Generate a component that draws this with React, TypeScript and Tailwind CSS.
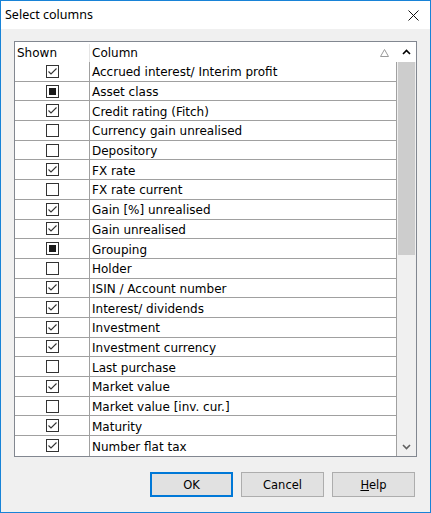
type State = "checked" | "mixed" | "empty"

const rows: { label: string; state: State }[] = [
    { label: "Accrued interest/ Interim profit", state: "checked" },
    { label: "Asset class", state: "mixed" },
    { label: "Credit rating (Fitch)", state: "checked" },
    { label: "Currency gain unrealised", state: "empty" },
    { label: "Depository", state: "empty" },
    { label: "FX rate", state: "checked" },
    { label: "FX rate current", state: "empty" },
    { label: "Gain [%] unrealised", state: "checked" },
    { label: "Gain unrealised", state: "checked" },
    { label: "Grouping", state: "mixed" },
    { label: "Holder", state: "empty" },
    { label: "ISIN / Account number", state: "checked" },
    { label: "Interest/ dividends", state: "checked" },
    { label: "Investment", state: "checked" },
    { label: "Investment currency", state: "checked" },
    { label: "Last purchase", state: "empty" },
    { label: "Market value", state: "checked" },
    { label: "Market value [inv. cur.]", state: "empty" },
    { label: "Maturity", state: "checked" },
    { label: "Number flat tax", state: "checked" },
]

function CheckBox({ state }: { state: State }) {
    return (
        <div className="w-[13px] h-[13px] border border-[#333333] bg-white flex items-center justify-center">
            {state === "checked" && (
                <svg width="11" height="11" viewBox="0 0 11 11">
                    <polyline points="1.5,5.5 4,8 9.5,2.5" fill="none" stroke="#333333" strokeWidth="1.1" />
                </svg>
            )}
            {state === "mixed" && <div className="w-[7px] h-[7px] bg-[#1a1a1a]" />}
        </div>
    )
}

function Button({ children, primary }: { children: React.ReactNode; primary?: boolean }) {
    return (
        <button
            className={
                primary
                    ? "w-[83px] h-[25px] pt-[2px] bg-[#e1e1e1] border-2 border-[#0078d7] text-[11.5px] text-black"
                    : "w-[83px] h-[25px] pt-[2px] bg-[#e1e1e1] border border-[#adadad] text-[11.5px] text-black"
            }
        >
            {children}
        </button>
    )
}

export default function App() {
    return (
        <div className="w-[431px] h-[513px] border border-[#1883d7] bg-[#f0f0f0] flex flex-col font-['DejaVu_Sans',sans-serif] text-[12px] text-black">
            {/* title bar */}
            <div className="h-[28px] bg-white flex items-center justify-between pl-[4px] pr-[11px] shrink-0">
                <span className="font-['Noto_Sans',sans-serif] text-[12.5px] text-black pt-[1px]">Select columns</span>
                <svg width="11" height="11" viewBox="0 0 11 11">
                    <path d="M0.5 0.5 L10.5 10.5 M10.5 0.5 L0.5 10.5" stroke="#111" strokeWidth="1" />
                </svg>
            </div>

            <div className="pl-[13px] pr-[14px] pt-[12px] flex flex-col">
                {/* list */}
                <div className="w-[403px] h-[416px] border border-[#828790] bg-white flex">
                    <div className="w-[382px] flex flex-col">
                        <div className="h-[20px] flex items-center shrink-0 pt-[2px]">
                            <div className="w-[75px] h-full pl-[2px] flex items-center border-r border-[#e5e5e5]">Shown</div>
                            <div className="flex-1 pl-[2px] flex items-center justify-between pr-[8px]">
                                <span>Column</span>
                                <svg width="9" height="8" viewBox="0 0 9 8">
                                    <polygon points="4.5,0.5 8.5,7.5 0.5,7.5" fill="none" stroke="#9a9a9a" strokeWidth="1" />
                                </svg>
                            </div>
                        </div>
                        <div className="flex-1 flex flex-col border-r border-[#a0a0a0]">
                            {rows.map((row) => (
                                <div key={row.label} className="h-[19.7px] flex border-b border-[#a0a0a0] last:border-b-0">
                                    <div className="w-[75px] flex items-center justify-center border-r border-[#a0a0a0]">
                                        <CheckBox state={row.state} />
                                    </div>
                                    <div className="flex-1 pl-[2px] pt-[2px] flex items-center">{row.label}</div>
                                </div>
                            ))}
                        </div>
                    </div>
                    {/* scrollbar */}
                    <div className="flex-1 bg-[#f0f0f0] flex flex-col">
                        <div className="h-[20px] flex items-center justify-center bg-white">
                            <svg width="9" height="6" viewBox="0 0 9 6">
                                <polyline points="1,5 4.5,1.5 8,5" fill="none" stroke="#000" strokeWidth="1.6" />
                            </svg>
                        </div>
                        <div className="h-[193px] mx-[1px] bg-[#cdcdcd]" />
                        <div className="flex-1" />
                        <div className="h-[19px] flex items-center justify-center">
                            <svg width="9" height="6" viewBox="0 0 9 6">
                                <polyline points="1,1 4.5,4.5 8,1" fill="none" stroke="#606060" strokeWidth="1.6" />
                            </svg>
                        </div>
                    </div>
                </div>

                {/* buttons */}
                <div className="mt-[15px] flex justify-end gap-[8px] pr-[1px]">
                    <Button primary>OK</Button>
                    <Button>Cancel</Button>
                    <Button>
                        <span className="underline">H</span>elp
                    </Button>
                </div>
            </div>
        </div>
    )
}
